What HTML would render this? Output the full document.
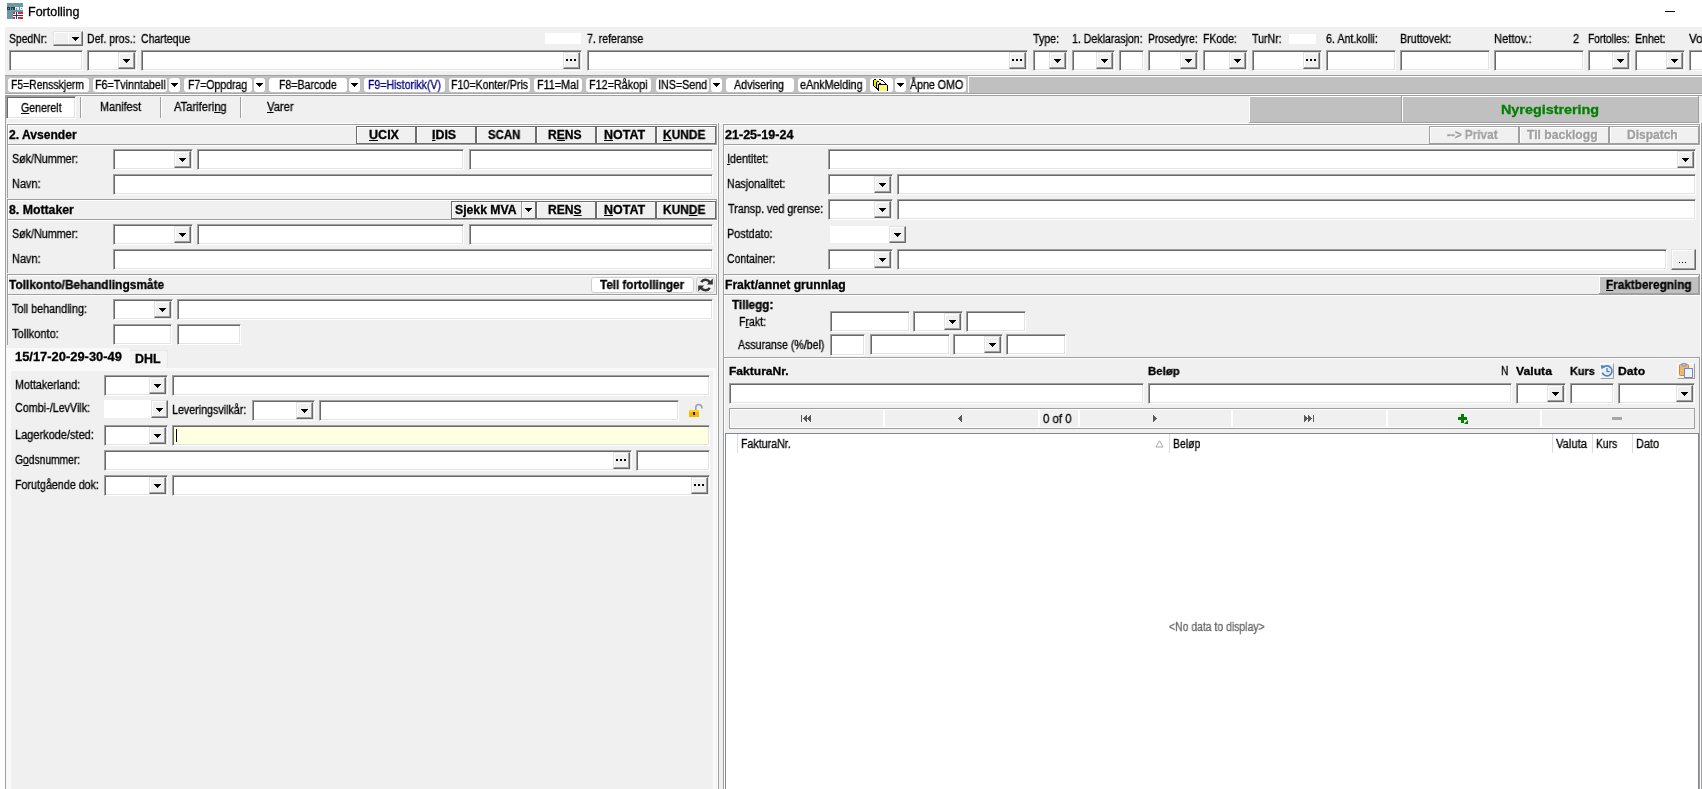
<!DOCTYPE html>
<html><head><meta charset="utf-8"><title>Fortolling</title><style>
html,body{margin:0;padding:0;background:#fff;}
body{width:1702px;height:789px;overflow:hidden;position:relative;font-family:"Liberation Sans",sans-serif;}
#w{position:absolute;left:0;top:0;width:1702px;height:789px;overflow:hidden;}
#w>*{position:absolute;box-sizing:border-box;}
.t{-webkit-text-stroke:0.3px;white-space:nowrap;transform-origin:0 0;display:block;will-change:transform;}
.t u{text-decoration:underline;text-underline-offset:1px;text-decoration-thickness:1px;}
.in{border:1px solid;border-color:#a0a0a0 #fff #fff #a0a0a0;box-shadow:inset 1px 1px 0 #696969, inset -1px -1px 0 #e3e3e3;}
.rb{background:#f0f0f0;border:1px solid;border-color:#e3e3e3 #696969 #696969 #e3e3e3;box-shadow:inset -1px -1px 0 #a0a0a0, inset 1px 1px 0 #fff;}
.bt{border:1px solid #6d6d6d;box-shadow:inset 1px 1px 0 #fff;}
.bt.dis{border-color:#a0a0a0;}
.tb{background:#fff;border-radius:3px;}
.wb{border:1px solid #cfcfcf;border-radius:3px;}
.fb{background:#f0f0f0;border:1px solid;border-color:#fff #a0a0a0 #a0a0a0 #fff;}
</style></head><body><div id="w">
<svg style="left:7px;top:3px" width="16" height="16" viewBox="0 0 16 16" shape-rendering="crispEdges">
<rect width="16" height="16" fill="#6b9aa7"/>
<rect x="0" y="4" width="3" height="3" fill="#2a3b42"/><rect x="1" y="5" width="1" height="1" fill="#6b9aa7"/><rect x="4" y="4" width="4" height="3" fill="#2a3b42"/><rect x="5" y="5" width="1" height="2" fill="#6b9aa7"/>
<rect x="8" y="4" width="4" height="3" fill="#e4edf0"/><rect x="9" y="5" width="1" height="2" fill="#6b9aa7"/><rect x="13" y="4" width="3" height="3" fill="#e4edf0"/><rect x="14" y="5" width="1" height="1" fill="#6b9aa7"/>
<rect x="6" y="9" width="10" height="7" fill="#ee2222"/>
<rect x="8" y="9" width="3" height="7" fill="#fff"/><rect x="6" y="11" width="10" height="3" fill="#fff"/>
<rect x="9" y="9" width="1" height="7" fill="#1b3a8a"/><rect x="6" y="12" width="10" height="1" fill="#1b3a8a"/>
</svg>
<span class="t" style="left:27.90px;top:6.42px;font-size:12.5px;line-height:12.5px;color:#000;transform:scaleX(0.9934);">Fortolling</span>
<div style="left:1665px;top:11px;width:10px;height:1px;background:#000;"></div>
<div style="left:5px;top:27px;width:1697px;height:762px;background:#f0f0f0;"></div>
<span class="t" style="left:8.90px;top:32.84px;font-size:12px;line-height:12px;color:#000;transform:scaleX(0.8659);">SpedNr:</span>
<span class="t" style="left:86.90px;top:32.84px;font-size:12px;line-height:12px;color:#000;transform:scaleX(0.8777);">Def. pros.:</span>
<span class="t" style="left:140.90px;top:32.84px;font-size:12px;line-height:12px;color:#000;transform:scaleX(0.8794);">Charteque</span>
<span class="t" style="left:587.40px;top:32.84px;font-size:12px;line-height:12px;color:#000;transform:scaleX(0.8796);">7. referanse</span>
<span class="t" style="left:1033.40px;top:32.84px;font-size:12px;line-height:12px;color:#000;transform:scaleX(0.8885);">Type:</span>
<span class="t" style="left:1071.90px;top:32.84px;font-size:12px;line-height:12px;color:#000;transform:scaleX(0.8818);">1. Deklarasjon:</span>
<span class="t" style="left:1147.90px;top:32.84px;font-size:12px;line-height:12px;color:#000;transform:scaleX(0.8552);">Prosedyre:</span>
<span class="t" style="left:1202.90px;top:32.84px;font-size:12px;line-height:12px;color:#000;transform:scaleX(0.8750);">FKode:</span>
<span class="t" style="left:1252.40px;top:32.84px;font-size:12px;line-height:12px;color:#000;transform:scaleX(0.8819);">TurNr:</span>
<span class="t" style="left:1326.15px;top:32.84px;font-size:12px;line-height:12px;color:#000;transform:scaleX(0.8930);">6. Ant.kolli:</span>
<span class="t" style="left:1400.15px;top:32.84px;font-size:12px;line-height:12px;color:#000;transform:scaleX(0.8950);">Bruttovekt:</span>
<span class="t" style="left:1494.40px;top:32.84px;font-size:12px;line-height:12px;color:#000;transform:scaleX(0.9298);">Nettov.:</span>
<span class="t" style="left:1573.40px;top:32.84px;font-size:12px;line-height:12px;color:#000;transform:scaleX(0.9121);">2</span>
<span class="t" style="left:1587.90px;top:32.84px;font-size:12px;line-height:12px;color:#000;transform:scaleX(0.8425);">Fortolles:</span>
<span class="t" style="left:1635.15px;top:32.84px;font-size:12px;line-height:12px;color:#000;transform:scaleX(0.8822);">Enhet:</span>
<span class="t" style="left:1688.90px;top:32.84px;font-size:12px;line-height:12px;color:#000;transform:scaleX(0.9714);">Vo</span>
<div class="rb" style="left:53px;top:31px;width:30px;height:15px"></div>
<div style="left:68px;top:32px;width:1px;height:12px;background:#fff;"></div>
<div style="left:72px;top:37px;width:7px;height:1px;background:#000;"></div>
<div style="left:73px;top:38px;width:5px;height:1px;background:#000;"></div>
<div style="left:74px;top:39px;width:3px;height:1px;background:#000;"></div>
<div style="left:75px;top:40px;width:1px;height:1px;background:#000;"></div>
<div style="left:545px;top:33px;width:36px;height:11px;background:#fff;"></div>
<div style="left:1289px;top:34px;width:27px;height:10px;background:#fff;"></div>
<div class="in" style="left:9px;top:50px;width:74px;height:21px;background:#fff"></div>
<div class="in" style="left:87px;top:50px;width:50px;height:21px;background:#fff"></div>
<div class="rb" style="left:118px;top:52px;width:17px;height:17px"></div>
<div style="left:123px;top:59px;width:7px;height:1px;background:#000;"></div>
<div style="left:124px;top:60px;width:5px;height:1px;background:#000;"></div>
<div style="left:125px;top:61px;width:3px;height:1px;background:#000;"></div>
<div style="left:126px;top:62px;width:1px;height:1px;background:#000;"></div>
<div class="in" style="left:141px;top:50px;width:441px;height:21px;background:#fff"></div>
<div class="rb" style="left:563px;top:52px;width:17px;height:17px"></div>
<div style="left:566px;top:59px;width:2px;height:2px;background:#000;"></div>
<div style="left:570px;top:59px;width:2px;height:2px;background:#000;"></div>
<div style="left:574px;top:59px;width:2px;height:2px;background:#000;"></div>
<div class="in" style="left:587px;top:50px;width:441px;height:21px;background:#fff"></div>
<div class="rb" style="left:1009px;top:52px;width:17px;height:17px"></div>
<div style="left:1012px;top:59px;width:2px;height:2px;background:#000;"></div>
<div style="left:1016px;top:59px;width:2px;height:2px;background:#000;"></div>
<div style="left:1020px;top:59px;width:2px;height:2px;background:#000;"></div>
<div class="in" style="left:1033px;top:50px;width:35px;height:21px;background:#fff"></div>
<div class="rb" style="left:1049px;top:52px;width:17px;height:17px"></div>
<div style="left:1054px;top:59px;width:7px;height:1px;background:#000;"></div>
<div style="left:1055px;top:60px;width:5px;height:1px;background:#000;"></div>
<div style="left:1056px;top:61px;width:3px;height:1px;background:#000;"></div>
<div style="left:1057px;top:62px;width:1px;height:1px;background:#000;"></div>
<div class="in" style="left:1072px;top:50px;width:43px;height:21px;background:#fff"></div>
<div class="rb" style="left:1096px;top:52px;width:17px;height:17px"></div>
<div style="left:1101px;top:59px;width:7px;height:1px;background:#000;"></div>
<div style="left:1102px;top:60px;width:5px;height:1px;background:#000;"></div>
<div style="left:1103px;top:61px;width:3px;height:1px;background:#000;"></div>
<div style="left:1104px;top:62px;width:1px;height:1px;background:#000;"></div>
<div class="in" style="left:1119px;top:50px;width:25px;height:21px;background:#fff"></div>
<div class="in" style="left:1148px;top:50px;width:51px;height:21px;background:#fff"></div>
<div class="rb" style="left:1180px;top:52px;width:17px;height:17px"></div>
<div style="left:1185px;top:59px;width:7px;height:1px;background:#000;"></div>
<div style="left:1186px;top:60px;width:5px;height:1px;background:#000;"></div>
<div style="left:1187px;top:61px;width:3px;height:1px;background:#000;"></div>
<div style="left:1188px;top:62px;width:1px;height:1px;background:#000;"></div>
<div class="in" style="left:1203px;top:50px;width:45px;height:21px;background:#fff"></div>
<div class="rb" style="left:1229px;top:52px;width:17px;height:17px"></div>
<div style="left:1234px;top:59px;width:7px;height:1px;background:#000;"></div>
<div style="left:1235px;top:60px;width:5px;height:1px;background:#000;"></div>
<div style="left:1236px;top:61px;width:3px;height:1px;background:#000;"></div>
<div style="left:1237px;top:62px;width:1px;height:1px;background:#000;"></div>
<div class="in" style="left:1252px;top:50px;width:70px;height:21px;background:#fff"></div>
<div class="rb" style="left:1303px;top:52px;width:17px;height:17px"></div>
<div style="left:1306px;top:59px;width:2px;height:2px;background:#000;"></div>
<div style="left:1310px;top:59px;width:2px;height:2px;background:#000;"></div>
<div style="left:1314px;top:59px;width:2px;height:2px;background:#000;"></div>
<div class="in" style="left:1326px;top:50px;width:70px;height:21px;background:#fff"></div>
<div class="in" style="left:1400px;top:50px;width:90px;height:21px;background:#fff"></div>
<div class="in" style="left:1494px;top:50px;width:90px;height:21px;background:#fff"></div>
<div class="in" style="left:1588px;top:50px;width:43px;height:21px;background:#fff"></div>
<div class="rb" style="left:1612px;top:52px;width:17px;height:17px"></div>
<div style="left:1617px;top:59px;width:7px;height:1px;background:#000;"></div>
<div style="left:1618px;top:60px;width:5px;height:1px;background:#000;"></div>
<div style="left:1619px;top:61px;width:3px;height:1px;background:#000;"></div>
<div style="left:1620px;top:62px;width:1px;height:1px;background:#000;"></div>
<div class="in" style="left:1635px;top:50px;width:50px;height:21px;background:#fff"></div>
<div class="rb" style="left:1666px;top:52px;width:17px;height:17px"></div>
<div style="left:1671px;top:59px;width:7px;height:1px;background:#000;"></div>
<div style="left:1672px;top:60px;width:5px;height:1px;background:#000;"></div>
<div style="left:1673px;top:61px;width:3px;height:1px;background:#000;"></div>
<div style="left:1674px;top:62px;width:1px;height:1px;background:#000;"></div>
<div class="in" style="left:1689px;top:50px;width:30px;height:21px;background:#fff"></div>
<div style="left:5px;top:75px;width:1697px;height:1px;background:#a0a0a0;"></div>
<div style="left:5px;top:76px;width:963px;height:18px;background:#c0c0c0;"></div>
<div style="left:5px;top:93px;width:963px;height:1px;background:#a9a9a9;"></div>
<div style="left:968px;top:76px;width:734px;height:18px;background:#c0c0c0;"></div>
<div style="left:968px;top:76px;width:734px;height:1px;background:#fff;"></div>
<div style="left:968px;top:76px;width:1px;height:17px;background:#fff;"></div>
<div style="left:968px;top:93px;width:734px;height:1px;background:#a0a0a0;"></div>
<div style="left:5px;top:94px;width:1697px;height:1px;background:#fff;"></div>
<div style="left:5px;top:95px;width:1697px;height:1px;background:#a0a0a0;"></div>
<div class="tb" style="left:8px;top:78px;width:81px;height:14px"></div>
<span class="t" style="left:11.00px;top:78.84px;font-size:12px;line-height:12px;color:#000;transform:scaleX(0.8652);">F5=Rensskjerm</span>
<div class="tb" style="left:93px;top:78px;width:74px;height:14px"></div>
<span class="t" style="left:95.00px;top:78.84px;font-size:12px;line-height:12px;color:#000;transform:scaleX(0.8930);">F6=Tvinntabell</span>
<div class="tb" style="left:169px;top:78px;width:11px;height:14px"></div>
<div style="left:171px;top:83px;width:7px;height:1px;background:#000;"></div>
<div style="left:172px;top:84px;width:5px;height:1px;background:#000;"></div>
<div style="left:173px;top:85px;width:3px;height:1px;background:#000;"></div>
<div style="left:174px;top:86px;width:1px;height:1px;background:#000;"></div>
<div class="tb" style="left:184px;top:78px;width:68px;height:14px"></div>
<span class="t" style="left:188.40px;top:78.84px;font-size:12px;line-height:12px;color:#000;transform:scaleX(0.8746);">F7=Oppdrag</span>
<div class="tb" style="left:254px;top:78px;width:11px;height:14px"></div>
<div style="left:256px;top:83px;width:7px;height:1px;background:#000;"></div>
<div style="left:257px;top:84px;width:5px;height:1px;background:#000;"></div>
<div style="left:258px;top:85px;width:3px;height:1px;background:#000;"></div>
<div style="left:259px;top:86px;width:1px;height:1px;background:#000;"></div>
<div class="tb" style="left:269px;top:78px;width:78px;height:14px"></div>
<span class="t" style="left:278.80px;top:78.84px;font-size:12px;line-height:12px;color:#000;transform:scaleX(0.8799);">F8=Barcode</span>
<div class="tb" style="left:349px;top:78px;width:11px;height:14px"></div>
<div style="left:351px;top:83px;width:7px;height:1px;background:#000;"></div>
<div style="left:352px;top:84px;width:5px;height:1px;background:#000;"></div>
<div style="left:353px;top:85px;width:3px;height:1px;background:#000;"></div>
<div style="left:354px;top:86px;width:1px;height:1px;background:#000;"></div>
<div class="tb" style="left:364px;top:78px;width:81px;height:14px"></div>
<span class="t" style="left:368.00px;top:78.84px;font-size:12px;line-height:12px;color:#000080;transform:scaleX(0.8795);">F9=Historikk(V)</span>
<div class="tb" style="left:449px;top:78px;width:81px;height:14px"></div>
<span class="t" style="left:451.00px;top:78.84px;font-size:12px;line-height:12px;color:#000;transform:scaleX(0.8844);">F10=Konter/Pris</span>
<div class="tb" style="left:534px;top:78px;width:48px;height:14px"></div>
<span class="t" style="left:537.00px;top:78.84px;font-size:12px;line-height:12px;color:#000;transform:scaleX(0.9019);">F11=Mal</span>
<div class="tb" style="left:586px;top:78px;width:65px;height:14px"></div>
<span class="t" style="left:589.00px;top:78.84px;font-size:12px;line-height:12px;color:#000;transform:scaleX(0.9007);">F12=Råkopi</span>
<div class="tb" style="left:656px;top:78px;width:53px;height:14px"></div>
<span class="t" style="left:657.80px;top:78.84px;font-size:12px;line-height:12px;color:#000;transform:scaleX(0.8935);">INS=Send</span>
<div class="tb" style="left:711px;top:78px;width:11px;height:14px"></div>
<div style="left:713px;top:83px;width:7px;height:1px;background:#000;"></div>
<div style="left:714px;top:84px;width:5px;height:1px;background:#000;"></div>
<div style="left:715px;top:85px;width:3px;height:1px;background:#000;"></div>
<div style="left:716px;top:86px;width:1px;height:1px;background:#000;"></div>
<div class="tb" style="left:726px;top:78px;width:68px;height:14px"></div>
<span class="t" style="left:734.40px;top:78.84px;font-size:12px;line-height:12px;color:#000;transform:scaleX(0.8929);">Advisering</span>
<div class="tb" style="left:798px;top:78px;width:68px;height:14px"></div>
<span class="t" style="left:800.00px;top:78.84px;font-size:12px;line-height:12px;color:#000;transform:scaleX(0.9023);">eAnkMelding</span>
<div class="tb" style="left:870px;top:78px;width:23px;height:14px"></div>
<div class="tb" style="left:895px;top:78px;width:11px;height:14px"></div>
<div style="left:897px;top:83px;width:7px;height:1px;background:#000;"></div>
<div style="left:898px;top:84px;width:5px;height:1px;background:#000;"></div>
<div style="left:899px;top:85px;width:3px;height:1px;background:#000;"></div>
<div style="left:900px;top:86px;width:1px;height:1px;background:#000;"></div>
<div class="tb" style="left:910px;top:78px;width:56px;height:14px"></div>
<span class="t" style="left:910.40px;top:78.84px;font-size:12px;line-height:12px;color:#000;transform:scaleX(0.8867);">Åpne OMO</span>
<svg style="left:873px;top:79px" width="15" height="12" viewBox="0 0 15 12" shape-rendering="crispEdges">
<path d="M0 1h1v6h-1zM1 0h2v1h-2zM1 7h1v1h-1zM2 8h1v1h-1zM3 9h1v1h-1zM4 10h1v1h-1z" fill="#000"/>
<path d="M1 1h4v1h-4zM1 2h1v5h-1zM2 2h2v6h-2z" fill="#e8e800"/>
<path d="M3 3h1v6h-1zM4 2h2v1h-2zM4 9h1v1h-1z" fill="#000"/>
<path d="M4 3h4v1h-4zM4 4h1v5h-1z" fill="#f4f400"/>
<path d="M5 5h1v6h-1zM6 4h2v1h-2zM6 0h2v1h-2zM8 1h2v1h-2zM10 2h1v1h-1zM11 3h1v1h-1zM12 4h1v1h-1zM13 5h1v1h-1z" fill="#000"/>
<path d="M6 5h8v1h-8z" fill="#000"/>
<rect x="6" y="6" width="8" height="6" fill="#fafa6e"/>
<rect x="14" y="6" width="1" height="6" fill="#000"/><rect x="5" y="11" width="1" height="1" fill="#000"/>
</svg>
<div style="left:5px;top:95px;width:1px;height:694px;background:#a0a0a0;"></div>
<div class="in" style="left:6px;top:96px;width:70px;height:23px;background:#fff"></div>
<span class="t" style="left:21.40px;top:101.84px;font-size:12px;line-height:12px;color:#000;transform:scaleX(0.8826);"><u>G</u>enerelt</span>
<span class="t" style="left:100.40px;top:100.84px;font-size:12px;line-height:12px;color:#000;transform:scaleX(0.9058);">Manifest</span>
<span class="t" style="left:174.40px;top:100.84px;font-size:12px;line-height:12px;color:#000;transform:scaleX(0.9320);">ATariferi<u>n</u>g</span>
<span class="t" style="left:267.40px;top:100.84px;font-size:12px;line-height:12px;color:#000;transform:scaleX(0.9354);"><u>V</u>arer</span>
<div style="left:80px;top:97px;width:1px;height:21px;background:#a0a0a0;"></div>
<div style="left:81px;top:97px;width:1px;height:21px;background:#fff;"></div>
<div style="left:160px;top:97px;width:1px;height:21px;background:#a0a0a0;"></div>
<div style="left:161px;top:97px;width:1px;height:21px;background:#fff;"></div>
<div style="left:240px;top:97px;width:1px;height:21px;background:#a0a0a0;"></div>
<div style="left:241px;top:97px;width:1px;height:21px;background:#fff;"></div>
<div style="left:1249px;top:96px;width:153px;height:27px;background:#c0c0c0;"></div>
<div style="left:1249px;top:96px;width:153px;height:1px;background:#fff;"></div>
<div style="left:1249px;top:96px;width:1px;height:27px;background:#fff;"></div>
<div style="left:1249px;top:122px;width:153px;height:1px;background:#a0a0a0;"></div>
<div style="left:1401px;top:96px;width:1px;height:27px;background:#a0a0a0;"></div>
<div style="left:1402px;top:96px;width:297px;height:27px;background:#c0c0c0;"></div>
<div style="left:1402px;top:96px;width:297px;height:1px;background:#fff;"></div>
<div style="left:1402px;top:96px;width:1px;height:27px;background:#fff;"></div>
<div style="left:1402px;top:122px;width:297px;height:1px;background:#a0a0a0;"></div>
<div style="left:1698px;top:96px;width:1px;height:27px;background:#a0a0a0;"></div>
<div style="left:6px;top:123px;width:1694px;height:1px;background:#fff;"></div>
<span class="t" style="left:1500.90px;top:102.57px;font-size:13.5px;line-height:13.5px;color:#008000;font-weight:bold;transform:scaleX(1.0634);">Nyregistrering</span>
<div style="left:7px;top:124px;width:710px;height:1px;background:#a0a0a0;"></div>
<div style="left:8px;top:125px;width:708px;height:1px;background:#fff;"></div>
<div style="left:7px;top:124px;width:1px;height:74px;background:#a0a0a0;"></div>
<div style="left:8px;top:125px;width:1px;height:20px;background:#fff;"></div>
<div style="left:716px;top:124px;width:1px;height:21px;background:#a0a0a0;"></div>
<div style="left:717px;top:124px;width:1px;height:74px;background:#fff;"></div>
<div style="left:7px;top:144px;width:710px;height:1px;background:#a0a0a0;"></div>
<div style="left:8px;top:145px;width:709px;height:1px;background:#fff;"></div>
<span class="t" style="left:9.40px;top:128.84px;font-size:12px;line-height:12px;color:#000;font-weight:bold;transform:scaleX(1.0071);">2. Avsender</span>
<div class="bt" style="left:356px;top:126px;width:60px;height:18px;background:#f0f0f0"></div>
<span class="t" style="left:369.40px;top:128.84px;font-size:12px;line-height:12px;color:#000;font-weight:bold;transform:scaleX(1.0458);"><u>U</u>CIX</span>
<div class="bt" style="left:416px;top:126px;width:60px;height:18px;background:#f0f0f0"></div>
<span class="t" style="left:432.35px;top:128.84px;font-size:12px;line-height:12px;color:#000;font-weight:bold;transform:scaleX(1.0338);"><u>I</u>DIS</span>
<div class="bt" style="left:476px;top:126px;width:60px;height:18px;background:#f0f0f0"></div>
<span class="t" style="left:488.22px;top:128.84px;font-size:12px;line-height:12px;color:#000;font-weight:bold;transform:scaleX(0.9515);">SCAN</span>
<div class="bt" style="left:536px;top:126px;width:60px;height:18px;background:#f0f0f0"></div>
<span class="t" style="left:547.60px;top:128.84px;font-size:12px;line-height:12px;color:#000;font-weight:bold;transform:scaleX(1.0086);">R<u>E</u>NS</span>
<div class="bt" style="left:596px;top:126px;width:60px;height:18px;background:#f0f0f0"></div>
<span class="t" style="left:603.85px;top:128.84px;font-size:12px;line-height:12px;color:#000;font-weight:bold;transform:scaleX(1.0389);"><u>N</u>OTAT</span>
<div class="bt" style="left:656px;top:126px;width:60px;height:18px;background:#f0f0f0"></div>
<span class="t" style="left:663.23px;top:128.84px;font-size:12px;line-height:12px;color:#000;font-weight:bold;transform:scaleX(0.9921);"><u>K</u>UNDE</span>
<span class="t" style="left:11.90px;top:152.84px;font-size:12px;line-height:12px;color:#000;transform:scaleX(0.8932);">Søk/Nummer:</span>
<div class="in" style="left:113px;top:149px;width:80px;height:21px;background:#fff"></div>
<div class="rb" style="left:174px;top:151px;width:17px;height:17px"></div>
<div style="left:179px;top:158px;width:7px;height:1px;background:#000;"></div>
<div style="left:180px;top:159px;width:5px;height:1px;background:#000;"></div>
<div style="left:181px;top:160px;width:3px;height:1px;background:#000;"></div>
<div style="left:182px;top:161px;width:1px;height:1px;background:#000;"></div>
<div class="in" style="left:197px;top:149px;width:267px;height:21px;background:#fff"></div>
<div class="in" style="left:469px;top:149px;width:244px;height:21px;background:#fff"></div>
<span class="t" style="left:11.90px;top:177.84px;font-size:12px;line-height:12px;color:#000;transform:scaleX(0.9116);">Navn:</span>
<div class="in" style="left:113px;top:174px;width:600px;height:21px;background:#fff"></div>
<div style="left:7px;top:199px;width:710px;height:1px;background:#a0a0a0;"></div>
<div style="left:8px;top:200px;width:708px;height:1px;background:#fff;"></div>
<div style="left:7px;top:199px;width:1px;height:74px;background:#a0a0a0;"></div>
<div style="left:8px;top:200px;width:1px;height:20px;background:#fff;"></div>
<div style="left:716px;top:199px;width:1px;height:21px;background:#a0a0a0;"></div>
<div style="left:717px;top:199px;width:1px;height:74px;background:#fff;"></div>
<div style="left:7px;top:219px;width:710px;height:1px;background:#a0a0a0;"></div>
<div style="left:8px;top:220px;width:709px;height:1px;background:#fff;"></div>
<span class="t" style="left:9.40px;top:203.84px;font-size:12px;line-height:12px;color:#000;font-weight:bold;transform:scaleX(1.0233);">8. Mottaker</span>
<div class="bt" style="left:451px;top:201px;width:85px;height:18px;background:#f0f0f0"></div>
<span class="t" style="left:454.90px;top:203.84px;font-size:12px;line-height:12px;color:#000;font-weight:bold;transform:scaleX(1.0182);">Sjekk MVA</span>
<div style="left:521px;top:202px;width:1px;height:16px;background:#a0a0a0;"></div>
<div style="left:522px;top:202px;width:1px;height:16px;background:#fff;"></div>
<div style="left:525px;top:208px;width:7px;height:1px;background:#000;"></div>
<div style="left:526px;top:209px;width:5px;height:1px;background:#000;"></div>
<div style="left:527px;top:210px;width:3px;height:1px;background:#000;"></div>
<div style="left:528px;top:211px;width:1px;height:1px;background:#000;"></div>
<div class="bt" style="left:536px;top:201px;width:60px;height:18px;background:#f0f0f0"></div>
<span class="t" style="left:547.60px;top:203.84px;font-size:12px;line-height:12px;color:#000;font-weight:bold;transform:scaleX(1.0086);">REN<u>S</u></span>
<div class="bt" style="left:596px;top:201px;width:60px;height:18px;background:#f0f0f0"></div>
<span class="t" style="left:603.85px;top:203.84px;font-size:12px;line-height:12px;color:#000;font-weight:bold;transform:scaleX(1.0389);"><u>N</u>OTAT</span>
<div class="bt" style="left:656px;top:201px;width:60px;height:18px;background:#f0f0f0"></div>
<span class="t" style="left:663.23px;top:203.84px;font-size:12px;line-height:12px;color:#000;font-weight:bold;transform:scaleX(0.9921);">KUN<u>D</u>E</span>
<span class="t" style="left:11.90px;top:227.84px;font-size:12px;line-height:12px;color:#000;transform:scaleX(0.8932);">Søk/Nummer:</span>
<div class="in" style="left:113px;top:224px;width:80px;height:21px;background:#fff"></div>
<div class="rb" style="left:174px;top:226px;width:17px;height:17px"></div>
<div style="left:179px;top:233px;width:7px;height:1px;background:#000;"></div>
<div style="left:180px;top:234px;width:5px;height:1px;background:#000;"></div>
<div style="left:181px;top:235px;width:3px;height:1px;background:#000;"></div>
<div style="left:182px;top:236px;width:1px;height:1px;background:#000;"></div>
<div class="in" style="left:197px;top:224px;width:267px;height:21px;background:#fff"></div>
<div class="in" style="left:469px;top:224px;width:244px;height:21px;background:#fff"></div>
<span class="t" style="left:11.90px;top:252.84px;font-size:12px;line-height:12px;color:#000;transform:scaleX(0.9116);">Navn:</span>
<div class="in" style="left:113px;top:249px;width:600px;height:21px;background:#fff"></div>
<div style="left:7px;top:274px;width:710px;height:1px;background:#a0a0a0;"></div>
<div style="left:8px;top:275px;width:708px;height:1px;background:#fff;"></div>
<div style="left:7px;top:274px;width:1px;height:71px;background:#a0a0a0;"></div>
<div style="left:8px;top:275px;width:1px;height:20px;background:#fff;"></div>
<div style="left:716px;top:274px;width:1px;height:21px;background:#a0a0a0;"></div>
<div style="left:717px;top:274px;width:1px;height:71px;background:#fff;"></div>
<div style="left:7px;top:294px;width:710px;height:1px;background:#a0a0a0;"></div>
<div style="left:8px;top:295px;width:709px;height:1px;background:#fff;"></div>
<span class="t" style="left:9.40px;top:278.84px;font-size:12px;line-height:12px;color:#000;font-weight:bold;transform:scaleX(0.9915);">Tollkonto/Behandlingsmåte</span>
<div class="wb" style="left:591px;top:277px;width:103px;height:16px;background:#fff"></div>
<span class="t" style="left:599.60px;top:278.84px;font-size:12px;line-height:12px;color:#000;font-weight:bold;transform:scaleX(0.9730);">Tell fortollinger</span>
<div class="wb" style="left:696px;top:277px;width:19px;height:16px;background:#f0f0f0"></div>
<svg style="left:698px;top:278px" width="15" height="14" viewBox="0 0 15 14"><path d="M12.2 5.2A5 5 0 0 0 3.2 4.2" fill="none" stroke="#333" stroke-width="2.4"/><path d="M14.8 0.6v6h-6z" fill="#333"/><path d="M2.8 8.8a5 5 0 0 0 9 1" fill="none" stroke="#333" stroke-width="2.4"/><path d="M0.2 13.4v-6h6z" fill="#333"/></svg>
<span class="t" style="left:11.90px;top:302.84px;font-size:12px;line-height:12px;color:#000;transform:scaleX(0.8978);">Toll behandling:</span>
<div class="in" style="left:113px;top:299px;width:60px;height:21px;background:#fff"></div>
<div class="rb" style="left:154px;top:301px;width:17px;height:17px"></div>
<div style="left:159px;top:308px;width:7px;height:1px;background:#000;"></div>
<div style="left:160px;top:309px;width:5px;height:1px;background:#000;"></div>
<div style="left:161px;top:310px;width:3px;height:1px;background:#000;"></div>
<div style="left:162px;top:311px;width:1px;height:1px;background:#000;"></div>
<div class="in" style="left:177px;top:299px;width:536px;height:21px;background:#fff"></div>
<span class="t" style="left:11.90px;top:327.84px;font-size:12px;line-height:12px;color:#000;transform:scaleX(0.9243);">Tollkonto:</span>
<div class="in" style="left:113px;top:324px;width:59px;height:21px;background:#fff"></div>
<div class="in" style="left:177px;top:324px;width:64px;height:21px;background:#fff"></div>
<div style="left:6px;top:348px;width:124px;height:20px;background:#f9f9f9;"></div>
<div style="left:130px;top:350px;width:38px;height:18px;background:#f4f4f4;"></div>
<div style="left:167px;top:350px;width:1px;height:18px;background:#e8e8e8;"></div>
<div style="left:130px;top:350px;width:38px;height:1px;background:#e8e8e8;"></div>
<div style="left:6px;top:368px;width:710px;height:421px;background:#f9f9f9;"></div>
<div style="left:11px;top:371px;width:702px;height:418px;background:#f0f0f0;"></div>
<span class="t" style="left:14.90px;top:350.84px;font-size:12px;line-height:12px;color:#000;font-weight:bold;transform:scaleX(1.0752);">15/17-20-29-30-49</span>
<span class="t" style="left:135.40px;top:352.84px;font-size:12px;line-height:12px;color:#000;font-weight:bold;transform:scaleX(1.0370);">DHL</span>
<span class="t" style="left:14.90px;top:378.84px;font-size:12px;line-height:12px;color:#000;transform:scaleX(0.8956);">Mottakerland:</span>
<div class="in" style="left:104px;top:375px;width:64px;height:21px;background:#fff"></div>
<div class="rb" style="left:149px;top:377px;width:17px;height:17px"></div>
<div style="left:154px;top:384px;width:7px;height:1px;background:#000;"></div>
<div style="left:155px;top:385px;width:5px;height:1px;background:#000;"></div>
<div style="left:156px;top:386px;width:3px;height:1px;background:#000;"></div>
<div style="left:157px;top:387px;width:1px;height:1px;background:#000;"></div>
<div class="in" style="left:172px;top:375px;width:538px;height:21px;background:#fff"></div>
<span class="t" style="left:14.90px;top:401.84px;font-size:12px;line-height:12px;color:#000;transform:scaleX(0.8960);">Combi-/LevVilk:</span>
<div style="left:104px;top:400px;width:47px;height:18px;background:#fff;"></div>
<div class="rb" style="left:151px;top:400px;width:17px;height:18px"></div>
<div style="left:156px;top:408px;width:7px;height:1px;background:#000;"></div>
<div style="left:157px;top:409px;width:5px;height:1px;background:#000;"></div>
<div style="left:158px;top:410px;width:3px;height:1px;background:#000;"></div>
<div style="left:159px;top:411px;width:1px;height:1px;background:#000;"></div>
<span class="t" style="left:171.90px;top:403.84px;font-size:12px;line-height:12px;color:#000;transform:scaleX(0.8918);">Leveringsvilkår:</span>
<div class="in" style="left:252px;top:400px;width:63px;height:21px;background:#fff"></div>
<div class="rb" style="left:296px;top:402px;width:17px;height:17px"></div>
<div style="left:301px;top:409px;width:7px;height:1px;background:#000;"></div>
<div style="left:302px;top:410px;width:5px;height:1px;background:#000;"></div>
<div style="left:303px;top:411px;width:3px;height:1px;background:#000;"></div>
<div style="left:304px;top:412px;width:1px;height:1px;background:#000;"></div>
<div class="in" style="left:319px;top:400px;width:360px;height:21px;background:#fff"></div>
<span class="t" style="left:14.90px;top:428.84px;font-size:12px;line-height:12px;color:#000;transform:scaleX(0.9162);">Lagerkode/sted:</span>
<div class="in" style="left:104px;top:425px;width:64px;height:21px;background:#fff"></div>
<div class="rb" style="left:149px;top:427px;width:17px;height:17px"></div>
<div style="left:154px;top:434px;width:7px;height:1px;background:#000;"></div>
<div style="left:155px;top:435px;width:5px;height:1px;background:#000;"></div>
<div style="left:156px;top:436px;width:3px;height:1px;background:#000;"></div>
<div style="left:157px;top:437px;width:1px;height:1px;background:#000;"></div>
<div class="in" style="left:172px;top:425px;width:538px;height:21px;background:#ffffe1"></div>
<div style="left:176px;top:429px;width:1px;height:13px;background:#000;"></div>
<span class="t" style="left:14.90px;top:453.84px;font-size:12px;line-height:12px;color:#000;transform:scaleX(0.8566);">G<u>o</u>dsnummer:</span>
<div class="in" style="left:104px;top:450px;width:528px;height:21px;background:#fff"></div>
<div class="rb" style="left:613px;top:452px;width:17px;height:17px"></div>
<div style="left:616px;top:459px;width:2px;height:2px;background:#000;"></div>
<div style="left:620px;top:459px;width:2px;height:2px;background:#000;"></div>
<div style="left:624px;top:459px;width:2px;height:2px;background:#000;"></div>
<div class="in" style="left:636px;top:450px;width:74px;height:21px;background:#fff"></div>
<span class="t" style="left:14.90px;top:478.84px;font-size:12px;line-height:12px;color:#000;transform:scaleX(0.8914);">Forutgående dok:</span>
<div class="in" style="left:104px;top:475px;width:64px;height:21px;background:#fff"></div>
<div class="rb" style="left:149px;top:477px;width:17px;height:17px"></div>
<div style="left:154px;top:484px;width:7px;height:1px;background:#000;"></div>
<div style="left:155px;top:485px;width:5px;height:1px;background:#000;"></div>
<div style="left:156px;top:486px;width:3px;height:1px;background:#000;"></div>
<div style="left:157px;top:487px;width:1px;height:1px;background:#000;"></div>
<div class="in" style="left:172px;top:475px;width:538px;height:21px;background:#fff"></div>
<div class="rb" style="left:691px;top:477px;width:17px;height:17px"></div>
<div style="left:694px;top:484px;width:2px;height:2px;background:#000;"></div>
<div style="left:698px;top:484px;width:2px;height:2px;background:#000;"></div>
<div style="left:702px;top:484px;width:2px;height:2px;background:#000;"></div>
<svg style="left:688px;top:403px" width="16" height="15" viewBox="0 0 16 15"><path d="M7.8 7V4.5a3 3 0 0 1 6 0V5.5" fill="none" stroke="#9aa0a6" stroke-width="1.6"/><rect x="1" y="7" width="10" height="7" fill="#f8b800"/><rect x="1" y="7" width="10" height="2" fill="#ffd21c"/><rect x="5" y="9" width="2" height="3" fill="#222"/></svg>
<div style="left:717px;top:123px;width:1px;height:666px;background:#fff;"></div>
<div style="left:718px;top:123px;width:1px;height:666px;background:#a0a0a0;"></div>
<div style="left:723px;top:124px;width:1px;height:665px;background:#a0a0a0;"></div>
<div style="left:724px;top:124px;width:1px;height:665px;background:#fff;"></div>
<div style="left:723px;top:124px;width:977px;height:1px;background:#a0a0a0;"></div>
<div style="left:724px;top:125px;width:975px;height:1px;background:#fff;"></div>
<div style="left:723px;top:124px;width:1px;height:150px;background:#a0a0a0;"></div>
<div style="left:724px;top:125px;width:1px;height:20px;background:#fff;"></div>
<div style="left:1699px;top:124px;width:1px;height:21px;background:#a0a0a0;"></div>
<div style="left:1700px;top:124px;width:1px;height:150px;background:#fff;"></div>
<div style="left:723px;top:144px;width:977px;height:1px;background:#a0a0a0;"></div>
<div style="left:724px;top:145px;width:976px;height:1px;background:#fff;"></div>
<div style="left:1700px;top:123px;width:1px;height:666px;background:#fff;"></div>
<div style="left:1701px;top:123px;width:1px;height:666px;background:#a0a0a0;"></div>
<span class="t" style="left:724.90px;top:128.84px;font-size:12px;line-height:12px;color:#000;font-weight:bold;transform:scaleX(1.0455);">21-25-19-24</span>
<div class="bt dis" style="left:1429px;top:126px;width:90px;height:18px;background:#f0f0f0"></div>
<span class="t" style="left:1447.10px;top:128.84px;font-size:12px;line-height:12px;color:#a0a0a0;font-weight:bold;text-shadow:1px 1px 0 #fff;transform:scaleX(0.9790);">--&gt; Privat</span>
<div class="bt dis" style="left:1519px;top:126px;width:90px;height:18px;background:#f0f0f0"></div>
<span class="t" style="left:1527.10px;top:128.84px;font-size:12px;line-height:12px;color:#a0a0a0;font-weight:bold;text-shadow:1px 1px 0 #fff;transform:scaleX(1.0113);">Til backlogg</span>
<div class="bt dis" style="left:1609px;top:126px;width:90px;height:18px;background:#f0f0f0"></div>
<span class="t" style="left:1627.10px;top:128.84px;font-size:12px;line-height:12px;color:#a0a0a0;font-weight:bold;text-shadow:1px 1px 0 #fff;">Dispatch</span>
<span class="t" style="left:727.40px;top:152.84px;font-size:12px;line-height:12px;color:#000;transform:scaleX(0.8977);"><u>I</u>dentitet:</span>
<div class="in" style="left:828px;top:149px;width:868px;height:21px;background:#fff"></div>
<div class="rb" style="left:1677px;top:151px;width:17px;height:17px"></div>
<div style="left:1682px;top:158px;width:7px;height:1px;background:#000;"></div>
<div style="left:1683px;top:159px;width:5px;height:1px;background:#000;"></div>
<div style="left:1684px;top:160px;width:3px;height:1px;background:#000;"></div>
<div style="left:1685px;top:161px;width:1px;height:1px;background:#000;"></div>
<span class="t" style="left:727.40px;top:177.84px;font-size:12px;line-height:12px;color:#000;transform:scaleX(0.8833);">Nasjonalitet:</span>
<div class="in" style="left:828px;top:174px;width:65px;height:21px;background:#fff"></div>
<div class="rb" style="left:874px;top:176px;width:17px;height:17px"></div>
<div style="left:879px;top:183px;width:7px;height:1px;background:#000;"></div>
<div style="left:880px;top:184px;width:5px;height:1px;background:#000;"></div>
<div style="left:881px;top:185px;width:3px;height:1px;background:#000;"></div>
<div style="left:882px;top:186px;width:1px;height:1px;background:#000;"></div>
<div class="in" style="left:897px;top:174px;width:799px;height:21px;background:#fff"></div>
<span class="t" style="left:727.90px;top:202.84px;font-size:12px;line-height:12px;color:#000;transform:scaleX(0.8951);">Transp. ved grense:</span>
<div class="in" style="left:828px;top:199px;width:65px;height:21px;background:#fff"></div>
<div class="rb" style="left:874px;top:201px;width:17px;height:17px"></div>
<div style="left:879px;top:208px;width:7px;height:1px;background:#000;"></div>
<div style="left:880px;top:209px;width:5px;height:1px;background:#000;"></div>
<div style="left:881px;top:210px;width:3px;height:1px;background:#000;"></div>
<div style="left:882px;top:211px;width:1px;height:1px;background:#000;"></div>
<div class="in" style="left:897px;top:199px;width:799px;height:21px;background:#fff"></div>
<span class="t" style="left:727.40px;top:227.84px;font-size:12px;line-height:12px;color:#000;transform:scaleX(0.8996);">Postdato:</span>
<div style="left:830px;top:226px;width:60px;height:17px;background:#fff;"></div>
<div class="rb" style="left:889px;top:226px;width:17px;height:17px"></div>
<div style="left:894px;top:233px;width:7px;height:1px;background:#000;"></div>
<div style="left:895px;top:234px;width:5px;height:1px;background:#000;"></div>
<div style="left:896px;top:235px;width:3px;height:1px;background:#000;"></div>
<div style="left:897px;top:236px;width:1px;height:1px;background:#000;"></div>
<span class="t" style="left:727.40px;top:252.84px;font-size:12px;line-height:12px;color:#000;transform:scaleX(0.8731);">Container:</span>
<div class="in" style="left:828px;top:249px;width:65px;height:21px;background:#fff"></div>
<div class="rb" style="left:874px;top:251px;width:17px;height:17px"></div>
<div style="left:879px;top:258px;width:7px;height:1px;background:#000;"></div>
<div style="left:880px;top:259px;width:5px;height:1px;background:#000;"></div>
<div style="left:881px;top:260px;width:3px;height:1px;background:#000;"></div>
<div style="left:882px;top:261px;width:1px;height:1px;background:#000;"></div>
<div class="in" style="left:897px;top:249px;width:770px;height:21px;background:#fff"></div>
<div class="rb" style="left:1671px;top:249px;width:25px;height:21px"></div>
<div style="left:1679px;top:262px;width:1px;height:1px;background:#000;"></div>
<div style="left:1682px;top:262px;width:1px;height:1px;background:#000;"></div>
<div style="left:1685px;top:262px;width:1px;height:1px;background:#000;"></div>
<div style="left:723px;top:274px;width:977px;height:1px;background:#a0a0a0;"></div>
<div style="left:724px;top:275px;width:975px;height:1px;background:#fff;"></div>
<div style="left:723px;top:274px;width:1px;height:84px;background:#a0a0a0;"></div>
<div style="left:724px;top:275px;width:1px;height:20px;background:#fff;"></div>
<div style="left:1699px;top:274px;width:1px;height:21px;background:#a0a0a0;"></div>
<div style="left:1700px;top:274px;width:1px;height:84px;background:#fff;"></div>
<div style="left:723px;top:294px;width:977px;height:1px;background:#a0a0a0;"></div>
<div style="left:724px;top:295px;width:976px;height:1px;background:#fff;"></div>
<div style="left:723px;top:357px;width:977px;height:1px;background:#a0a0a0;"></div>
<span class="t" style="left:724.90px;top:278.84px;font-size:12px;line-height:12px;color:#000;font-weight:bold;transform:scaleX(1.0103);">Frakt/annet grunnlag</span>
<div style="left:1599px;top:276px;width:100px;height:18px;background:#c0c0c0;"></div>
<div style="left:1599px;top:276px;width:100px;height:1px;background:#fff;"></div>
<div style="left:1599px;top:276px;width:1px;height:18px;background:#fff;"></div>
<div style="left:1599px;top:293px;width:100px;height:1px;background:#a0a0a0;"></div>
<div style="left:1698px;top:276px;width:1px;height:18px;background:#a0a0a0;"></div>
<span class="t" style="left:1606.40px;top:278.84px;font-size:12px;line-height:12px;color:#000;font-weight:bold;transform:scaleX(0.9797);"><u>F</u>raktberegning</span>
<span class="t" style="left:732.40px;top:298.84px;font-size:12px;line-height:12px;color:#000;font-weight:bold;transform:scaleX(0.9744);">Tillegg:</span>
<span class="t" style="left:738.65px;top:315.84px;font-size:12px;line-height:12px;color:#000;transform:scaleX(0.8831);">F<u>r</u>akt:</span>
<div class="in" style="left:830px;top:311px;width:80px;height:21px;background:#fff"></div>
<div class="in" style="left:913px;top:311px;width:50px;height:21px;background:#fff"></div>
<div class="rb" style="left:944px;top:313px;width:17px;height:17px"></div>
<div style="left:949px;top:320px;width:7px;height:1px;background:#000;"></div>
<div style="left:950px;top:321px;width:5px;height:1px;background:#000;"></div>
<div style="left:951px;top:322px;width:3px;height:1px;background:#000;"></div>
<div style="left:952px;top:323px;width:1px;height:1px;background:#000;"></div>
<div class="in" style="left:966px;top:311px;width:60px;height:21px;background:#fff"></div>
<span class="t" style="left:738.15px;top:339.34px;font-size:12px;line-height:12px;color:#000;transform:scaleX(0.8806);">Assuranse (%/bel)</span>
<div class="in" style="left:830px;top:334px;width:35px;height:22px;background:#fff"></div>
<div class="in" style="left:870px;top:334px;width:80px;height:21px;background:#fff"></div>
<div class="in" style="left:953px;top:334px;width:50px;height:21px;background:#fff"></div>
<div class="rb" style="left:984px;top:336px;width:17px;height:17px"></div>
<div style="left:989px;top:343px;width:7px;height:1px;background:#000;"></div>
<div style="left:990px;top:344px;width:5px;height:1px;background:#000;"></div>
<div style="left:991px;top:345px;width:3px;height:1px;background:#000;"></div>
<div style="left:992px;top:346px;width:1px;height:1px;background:#000;"></div>
<div class="in" style="left:1006px;top:334px;width:60px;height:21px;background:#fff"></div>
<div style="left:724px;top:358px;width:975px;height:1px;background:#fff;"></div>
<div style="left:1699px;top:357px;width:1px;height:432px;background:#a0a0a0;"></div>
<span class="t" style="left:728.65px;top:366.27px;font-size:11.5px;line-height:11.5px;color:#000;font-weight:bold;transform:scaleX(1.0479);">FakturaNr.</span>
<span class="t" style="left:1147.65px;top:366.27px;font-size:11.5px;line-height:11.5px;color:#000;font-weight:bold;transform:scaleX(0.9894);">Beløp</span>
<span class="t" style="left:1500.65px;top:364.84px;font-size:12px;line-height:12px;color:#000;transform:scaleX(0.8460);">N</span>
<span class="t" style="left:1515.90px;top:366.27px;font-size:11.5px;line-height:11.5px;color:#000;font-weight:bold;transform:scaleX(1.0618);">Valuta</span>
<span class="t" style="left:1570.15px;top:366.27px;font-size:11.5px;line-height:11.5px;color:#000;font-weight:bold;transform:scaleX(0.9489);">Kurs</span>
<span class="t" style="left:1617.90px;top:366.27px;font-size:11.5px;line-height:11.5px;color:#000;font-weight:bold;transform:scaleX(1.0601);">Dato</span>
<div class="in" style="left:729px;top:383px;width:415px;height:21px;background:#fff"></div>
<div class="in" style="left:1148px;top:383px;width:364px;height:21px;background:#fff"></div>
<div class="in" style="left:1516px;top:383px;width:50px;height:21px;background:#fff"></div>
<div class="rb" style="left:1547px;top:385px;width:17px;height:17px"></div>
<div style="left:1552px;top:392px;width:7px;height:1px;background:#000;"></div>
<div style="left:1553px;top:393px;width:5px;height:1px;background:#000;"></div>
<div style="left:1554px;top:394px;width:3px;height:1px;background:#000;"></div>
<div style="left:1555px;top:395px;width:1px;height:1px;background:#000;"></div>
<div class="in" style="left:1570px;top:383px;width:44px;height:21px;background:#fff"></div>
<div class="in" style="left:1618px;top:383px;width:77px;height:21px;background:#fff"></div>
<div class="rb" style="left:1676px;top:385px;width:17px;height:17px"></div>
<div style="left:1681px;top:392px;width:7px;height:1px;background:#000;"></div>
<div style="left:1682px;top:393px;width:5px;height:1px;background:#000;"></div>
<div style="left:1683px;top:394px;width:3px;height:1px;background:#000;"></div>
<div style="left:1684px;top:395px;width:1px;height:1px;background:#000;"></div>
<div class="fb" style="left:1600px;top:363px;width:14px;height:16px"></div>
<svg style="left:1600px;top:364px" width="14" height="14" viewBox="0 0 14 14"><path d="M3.2 3.6A5 5 0 1 1 2.3 8.6" fill="none" stroke="#4a86c8" stroke-width="1.7"/><path d="M0.6 1.2l4.6 0.6-3.6 3.6z" fill="#4a86c8"/><path d="M7 4v3.5h2.6" fill="none" stroke="#4a86c8" stroke-width="1.3"/></svg>
<div class="fb" style="left:1677px;top:363px;width:18px;height:16px"></div>
<svg style="left:1678px;top:363px" width="16" height="16" viewBox="0 0 16 16"><rect x="1.5" y="1.5" width="9" height="11" rx="1" fill="#ecb86e" stroke="#c98a3c"/><rect x="4" y="0.5" width="4" height="2.5" fill="#b8c4e0" stroke="#7a8cc0" stroke-width="0.8"/><rect x="6.5" y="5.5" width="8" height="9" fill="#eef2fb" stroke="#7a86c4"/></svg>
<div style="left:729px;top:408px;width:966px;height:21px;background:#f0f0f0;"></div>
<div style="left:729px;top:408px;width:966px;height:1px;background:#a0a0a0;"></div>
<div style="left:729px;top:408px;width:1px;height:21px;background:#a0a0a0;"></div>
<div style="left:729px;top:428px;width:966px;height:1px;background:#a0a0a0;"></div>
<div style="left:1694px;top:408px;width:1px;height:21px;background:#a0a0a0;"></div>
<div style="left:730px;top:409px;width:964px;height:1px;background:#fff;"></div>
<div style="left:730px;top:409px;width:1px;height:19px;background:#fff;"></div>
<div style="left:730px;top:427px;width:964px;height:1px;background:#fff;"></div>
<div style="left:883px;top:410px;width:2px;height:17px;background:#fff;"></div>
<div style="left:1038px;top:410px;width:2px;height:17px;background:#fff;"></div>
<div style="left:1078px;top:410px;width:2px;height:17px;background:#fff;"></div>
<div style="left:1231px;top:410px;width:2px;height:17px;background:#fff;"></div>
<div style="left:1386px;top:410px;width:2px;height:17px;background:#fff;"></div>
<div style="left:1540px;top:410px;width:2px;height:17px;background:#fff;"></div>
<div style="left:801px;top:415px;width:1px;height:7px;background:#5a5a5a;"></div>
<div style="left:803px;top:418px;width:1px;height:1px;background:#5a5a5a;"></div>
<div style="left:804px;top:417px;width:1px;height:3px;background:#5a5a5a;"></div>
<div style="left:805px;top:416px;width:1px;height:5px;background:#5a5a5a;"></div>
<div style="left:806px;top:415px;width:1px;height:7px;background:#5a5a5a;"></div>
<div style="left:807px;top:418px;width:1px;height:1px;background:#5a5a5a;"></div>
<div style="left:808px;top:417px;width:1px;height:3px;background:#5a5a5a;"></div>
<div style="left:809px;top:416px;width:1px;height:5px;background:#5a5a5a;"></div>
<div style="left:810px;top:415px;width:1px;height:7px;background:#5a5a5a;"></div>
<div style="left:958px;top:418px;width:1px;height:1px;background:#5a5a5a;"></div>
<div style="left:959px;top:417px;width:1px;height:3px;background:#5a5a5a;"></div>
<div style="left:960px;top:416px;width:1px;height:5px;background:#5a5a5a;"></div>
<div style="left:961px;top:415px;width:1px;height:7px;background:#5a5a5a;"></div>
<span class="t" style="left:1043.15px;top:413.34px;font-size:12px;line-height:12px;color:#000;transform:scaleX(0.9533);">0 of 0</span>
<div style="left:1153px;top:415px;width:1px;height:7px;background:#5a5a5a;"></div>
<div style="left:1154px;top:416px;width:1px;height:5px;background:#5a5a5a;"></div>
<div style="left:1155px;top:417px;width:1px;height:3px;background:#5a5a5a;"></div>
<div style="left:1156px;top:418px;width:1px;height:1px;background:#5a5a5a;"></div>
<div style="left:1304px;top:415px;width:1px;height:7px;background:#5a5a5a;"></div>
<div style="left:1305px;top:416px;width:1px;height:5px;background:#5a5a5a;"></div>
<div style="left:1306px;top:417px;width:1px;height:3px;background:#5a5a5a;"></div>
<div style="left:1307px;top:418px;width:1px;height:1px;background:#5a5a5a;"></div>
<div style="left:1308px;top:415px;width:1px;height:7px;background:#5a5a5a;"></div>
<div style="left:1309px;top:416px;width:1px;height:5px;background:#5a5a5a;"></div>
<div style="left:1310px;top:417px;width:1px;height:3px;background:#5a5a5a;"></div>
<div style="left:1311px;top:418px;width:1px;height:1px;background:#5a5a5a;"></div>
<div style="left:1313px;top:415px;width:1px;height:7px;background:#5a5a5a;"></div>
<div style="left:1461px;top:414px;width:3px;height:9px;background:#008000;"></div>
<div style="left:1458px;top:417px;width:9px;height:3px;background:#008000;"></div>
<svg style="left:1464px;top:420px" width="4" height="4" viewBox="0 0 4 4"><path d="M4 0V4H0z" fill="#008000"/></svg>
<div style="left:1612px;top:417px;width:10px;height:3px;background:#a6a6a6;"></div>
<div style="left:725px;top:433px;width:974px;height:356px;background:#fff;"></div>
<div style="left:725px;top:433px;width:974px;height:1px;background:#828790;"></div>
<div style="left:725px;top:433px;width:1px;height:356px;background:#828790;"></div>
<div style="left:1698px;top:433px;width:1px;height:356px;background:#828790;"></div>
<div style="left:737px;top:434px;width:1px;height:19px;background:#dcdcdc;"></div>
<div style="left:1169px;top:434px;width:1px;height:19px;background:#dcdcdc;"></div>
<div style="left:1552px;top:434px;width:1px;height:19px;background:#dcdcdc;"></div>
<div style="left:1592px;top:434px;width:1px;height:19px;background:#dcdcdc;"></div>
<div style="left:1632px;top:434px;width:1px;height:19px;background:#dcdcdc;"></div>
<span class="t" style="left:740.90px;top:437.84px;font-size:12px;line-height:12px;color:#000;transform:scaleX(0.8875);">FakturaNr.</span>
<span class="t" style="left:1173.15px;top:437.84px;font-size:12px;line-height:12px;color:#000;transform:scaleX(0.8717);">Beløp</span>
<span class="t" style="left:1555.65px;top:437.84px;font-size:12px;line-height:12px;color:#000;transform:scaleX(0.9313);">Valuta</span>
<span class="t" style="left:1596.40px;top:437.84px;font-size:12px;line-height:12px;color:#000;transform:scaleX(0.8547);">Kurs</span>
<span class="t" style="left:1636.40px;top:437.84px;font-size:12px;line-height:12px;color:#000;transform:scaleX(0.9103);">Dato</span>
<svg style="left:1155px;top:440px" width="9" height="8" viewBox="0 0 9 8"><path d="M4.5 0.8L8 7H1z" fill="none" stroke="#a8a8a8" stroke-width="1"/></svg>
<span class="t" style="left:1169.40px;top:620.84px;font-size:12px;line-height:12px;color:#696969;transform:scaleX(0.8686);">&lt;No data to display&gt;</span>
</div></body></html>
